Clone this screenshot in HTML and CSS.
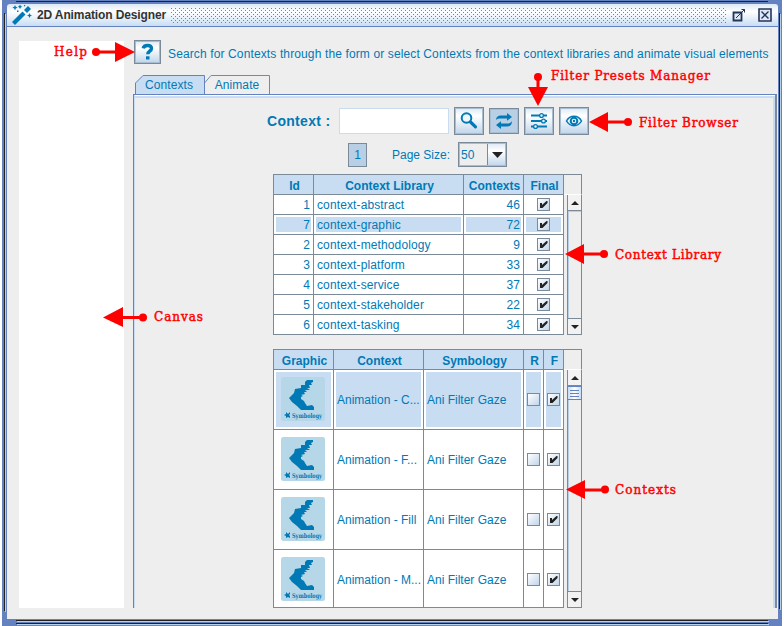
FILE: index.html
```html
<!DOCTYPE html>
<html lang="en">
<head>
<meta charset="utf-8">
<title>2D Animation Designer</title>
<link rel="stylesheet" href="styles.css">
</head>
<body>
<svg class="defs" aria-hidden="true">
  <symbol id="emblem" viewBox="0 0 44 44">
    <rect width="44" height="44" rx="2.5" fill="#b6d7e8"/>
    <path fill="#0079b5" d="M32 3L26 3L24 5L24 8L20 8L20 11L14 12L13 16L8 21L11 25L16 29L20 33L33 33L33 30L31 28L26 29L24 26L23 24L20 22L20 20L22 19L20 18L24 17L23 15L26 15L24 13L29 13L26 11L29 11L28 8L31 8L30 6L32 5z"/>
    <path fill="#0079b5" d="M3 38l2-1V35l2 2 2-2v2l-1 1 1 1v2l-2-1-2 1v-2z"/>
    <text x="11" y="40.600" textLength="30" lengthAdjust="spacingAndGlyphs" class="emblem-text">Symbology</text>
  </symbol>
  <symbol id="tick" viewBox="0 0 11 11"><path fill="#222" d="M2 4h2v2L8.500 2H9.500v2L4.500 9H2z"/></symbol>
</svg>
<div class="window">
  <header class="titlebar">
    <svg class="wand" width="22" height="22" viewBox="0 0 22 22"><path d="M2.500 19.500L13 9" stroke="#0079b5" stroke-width="4.200"/><path d="M14.500 7.500L18.500 3.500" stroke="#0079b5" stroke-width="4.200"/><path fill="#0079b5" d="M4 1l.8 1.800 1.800.8-1.800.8L4 6.200l-.8-1.800-1.800-.8 1.800-.8zM9 .5l.8 1.400 1.400.8-1.400.8L9 4.900l-.8-1.400-1.400-.8 1.400-.8zM18.500 9l.8 1.700 1.700.8-1.700.8-.8 1.700-.8-1.700-1.700-.8 1.700-.8zM6 6.500h1.500V8H6zM13 1h1.200v1.200H13z"/></svg>
    <h1>2D Animation Designer</h1>
    <div class="grip"></div>
    <svg class="win-icon" width="14" height="14" viewBox="0 0 14 14"><path d="M1.500 4.500h8v8h-8z" fill="#dfe9f4" stroke="#24355c" stroke-width="1.800"/><path d="M4 10L12.500 1.500M9.500 1.500h3v3" fill="none" stroke="#24355c"/></svg>
    <svg class="win-icon close" width="14" height="14" viewBox="0 0 14 14"><path d="M1 1h12v12H1z" fill="#dfe9f4" stroke="#24355c" stroke-width="1.600"/><path d="M3.500 3.500l7 7m0-7l-7 7" stroke="#24355c" stroke-width="1.400"/></svg>
  </header>
  <main class="body">
    <div class="canvas"></div>
    <section class="work">
      <div class="help-row">
        <button class="btn help"><svg width="14" height="18" viewBox="0 0 14 18"><path d="M2.200 5.400Q2.800 2.500 6.500 2.500q4 0 4 3c0 2.700-3.700 2.700-3.700 5.700" fill="none" stroke="#0079b5" stroke-width="3.400"/><path d="M5 13.300h3.500v3.200H5z" fill="#0079b5"/></svg></button>
        <span class="hint">Search for Contexts through the form or select Contexts from the context libraries and animate visual elements</span>
      </div>
      <div class="tabs">
        <svg class="tab-shapes" width="136" height="21" viewBox="0 0 136 21"><path d="M69.500 20V8l6.500-7.500h58.500V20" fill="#eee" stroke="#7a8a99"/><path d="M.5 21V8L8 .5h61.500V21z" fill="#c8ddf2"/><path d="M.5 21V8L8 .5h61.500V21" fill="none" stroke="#6382bf"/></svg>
        <span class="tab t1">Contexts</span><span class="tab t2">Animate</span>
      </div>
      <div class="panel">
        <div class="search">
          <label>Context :</label>
          <input type="text" aria-label="Context">
          <button class="btn"><svg width="20" height="20" viewBox="0 0 20 20"><circle cx="7.500" cy="7" r="4.800" fill="#eef6fc" stroke="#0079b5" stroke-width="2"/><path d="M11.500 11l5 4.800" stroke="#0079b5" stroke-width="3.200" stroke-linecap="round"/></svg></button>
          <button class="btn on"><svg width="18" height="18" viewBox="0 0 18 18"><path fill="#0079b5" d="M1 8c0-3 2-4.500 5-4.500h6V1l5 4-5 3.800V6.500H6C3.500 6.500 2 6.700 1 8zM17 9c0 4-2 5.500-5 5.500H6V17l-5-4 5-3.800v2.300h6c2.500 0 4-.8 5-2.500z"/></svg></button>
          <button class="btn"><svg width="18" height="18" viewBox="0 0 18 18"><path d="M1 3.500h16M1 9h16M1 14.500h16" stroke="#0079b5" stroke-width="2"/><g fill="#e8f2fa" stroke="#0079b5" stroke-width="1.300"><circle cx="11.500" cy="3.500" r="1.900"/><circle cx="13.500" cy="9" r="1.900"/><circle cx="5.500" cy="14.500" r="1.900"/></g></svg></button>
          <button class="btn"><svg width="18" height="14" viewBox="0 0 18 14"><path d="M1.500 7C5 .8 13 .8 16.500 7 13 13.200 5 13.200 1.500 7z" fill="#eef6fc" stroke="#0079b5" stroke-width="1.500"/><circle cx="9" cy="7" r="3.300" fill="none" stroke="#0079b5" stroke-width="2"/><circle cx="9" cy="7" r="1.200" fill="#0079b5"/></svg></button>
        </div>
        <div class="paging">
          <span class="page">1</span>
          <span class="page-label">Page Size:</span>
          <div class="combo"><span>50</span><i><svg width="11" height="6" viewBox="0 0 11 6"><path d="M0 0h11L5.500 6z" fill="#222"/></svg></i></div>
        </div>
        <div class="grid-wrap library">
          <div class="table">
            <div class="row head"><b>Id</b><b>Context Library</b><b>Contexts</b><b>Final</b></div>
            <div class="row"><span>1</span><span>context-abstract</span><span>46</span><span><svg class="check"><use href="#tick"/></svg></span></div>
            <div class="row sel"><span>7</span><span>context-graphic</span><span>72</span><span><svg class="check"><use href="#tick"/></svg></span></div>
            <div class="row"><span>2</span><span>context-methodology</span><span>9</span><span><svg class="check"><use href="#tick"/></svg></span></div>
            <div class="row"><span>3</span><span>context-platform</span><span>33</span><span><svg class="check"><use href="#tick"/></svg></span></div>
            <div class="row"><span>4</span><span>context-service</span><span>37</span><span><svg class="check"><use href="#tick"/></svg></span></div>
            <div class="row"><span>5</span><span>context-stakeholder</span><span>22</span><span><svg class="check"><use href="#tick"/></svg></span></div>
            <div class="row"><span>6</span><span>context-tasking</span><span>34</span><span><svg class="check"><use href="#tick"/></svg></span></div>
          </div>
          <div class="side"><div class="corner"></div><div class="scroll"><i class="arrow up"></i><div class="track"></div><i class="arrow down"></i></div></div>
        </div>
        <div class="grid-wrap contexts">
          <div class="table">
            <div class="row head"><b>Graphic</b><b>Context</b><b>Symbology</b><b>R</b><b>F</b></div>
            <div class="row sel"><span><svg width="44" height="44"><use href="#emblem"/></svg></span><span>Animation - C...</span><span>Ani Filter Gaze</span><span><svg class="check"></svg></span><span><svg class="check"><use href="#tick"/></svg></span></div>
            <div class="row"><span><svg width="44" height="44"><use href="#emblem"/></svg></span><span>Animation - F...</span><span>Ani Filter Gaze</span><span><svg class="check"></svg></span><span><svg class="check"><use href="#tick"/></svg></span></div>
            <div class="row"><span><svg width="44" height="44"><use href="#emblem"/></svg></span><span>Animation - Fill</span><span>Ani Filter Gaze</span><span><svg class="check"></svg></span><span><svg class="check"><use href="#tick"/></svg></span></div>
            <div class="row"><span><svg width="44" height="44"><use href="#emblem"/></svg></span><span>Animation - M...</span><span>Ani Filter Gaze</span><span><svg class="check"></svg></span><span><svg class="check"><use href="#tick"/></svg></span></div>
          </div>
          <div class="side"><div class="corner"></div><div class="scroll"><i class="arrow up"></i><div class="track"><div class="thumb"></div></div><i class="arrow down"></i></div></div>
        </div>
      </div>
    </section>
  </main>
</div>
<svg class="callouts" width="784" height="626" viewBox="0 0 784 626">
  <g fill="red" stroke="none">
    <path d="M96 50.500h22v3H96zM115 42l20 10-20 10z"/><circle cx="96" cy="52" r="4"/>
    <path d="M120 316h24v3h-24zM123 307v20l-20-9.500z"/><circle cx="143" cy="317.500" r="4"/>
    <path d="M536.500 77h3v14h-3zM528 87h20l-10 19z"/><circle cx="538" cy="77" r="4"/>
    <path d="M605 120.500h23v3h-23zM608 112v20l-19-10z"/><circle cx="628" cy="122" r="4"/>
    <path d="M582 252.500h22v3h-22zM584 244v20l-19-10z"/><circle cx="604" cy="254" r="4"/>
    <path d="M582 488.500h22v3h-22zM585 480v19l-19-9.500z"/><circle cx="605" cy="489.500" r="4"/>
  </g>
  <g class="callout-text">
    <text x="54" y="56" textLength="33">Help</text>
    <text x="154" y="321" textLength="49">Canvas</text>
    <text x="551" y="80" textLength="159">Filter Presets Manager</text>
    <text x="639" y="127" textLength="99">Filter Browser</text>
    <text x="615" y="259" textLength="106">Context Library</text>
    <text x="615" y="494" textLength="61">Contexts</text>
  </g>
</svg>
</body>
</html>
```
FILE: styles.css
```css
* { box-sizing: border-box; }
body { margin: 0; width: 784px; height: 626px; overflow: hidden; background: #fff; font: 12px/14px "Liberation Sans", sans-serif; color: #0079b5; position: relative; }
.defs { position: absolute; width: 0; height: 0; }
svg { display: block; flex: none; }
.window {
  width: 780px; height: 626px; margin-left: 2px; padding: 4px 4px 8px 5px; display: flex; flex-direction: column;
  background:
    linear-gradient(#222 0 0) 14px 1px / 752px 1px no-repeat,
    linear-gradient(#222 0 0) 14px 620px / 752px 1px no-repeat,
    linear-gradient(#b8cfe5 0 0) 15px 621px / 752px 1px no-repeat,
    linear-gradient(#222 0 0) 14px 623px / 752px 1px no-repeat,
    linear-gradient(#b8cfe5 0 0) 15px 624px / 752px 1px no-repeat,
    linear-gradient(#222 0 0) 2px 13px / 1px 598px no-repeat,
    linear-gradient(#b8cfe5 0 0) 3px 14px / 1px 598px no-repeat,
    linear-gradient(#222 0 0) 777px 13px / 1px 596px no-repeat,
    linear-gradient(#b8cfe5 0 0) 778px 14px / 1px 596px no-repeat,
    #6382bf;
}
.titlebar { height: 23px; flex: none; display: flex; align-items: center; padding: 0 5px 0 4px; border-bottom: 1px solid #6382bf; background: linear-gradient(#dce9f5, #fff 35%, #c8ddf2); border-radius: 3px 3px 0 0; }
.titlebar h1 { margin: 0 4px 0 4px; width: 130px; font-size: 12px; line-height: 22px; color: #333; white-space: nowrap; letter-spacing: -.12px; }
.grip { width: 555px; height: 15px; background: conic-gradient(from 0deg at 1px 1px, transparent 270deg, #6382bf 0) 0 0 / 4px 4px, conic-gradient(from 0deg at 1px 1px, transparent 270deg, #6382bf 0) 2px 2px / 4px 4px; }
.win-icon { margin-left: 6px; }
.win-icon.close { margin-left: 12px; }
.body { flex: 1; display: flex; background: #eee; padding: 13px 0 11px 12px; }
.canvas { width: 105px; height: 567px; margin-top: 1px; background: #fff; flex: none; }
.work { margin-left: 9px; width: 644px; display: flex; flex-direction: column; }
.help-row { display: flex; height: 24px; padding-left: 1px; align-items: center; flex: none; }
.hint { margin-left: 7px; font-size: 12px; white-space: nowrap; letter-spacing: .125px; line-height: 24px; padding-top: 3px; }
.btn { width: 30px; height: 28px; padding: 0; border: 1px solid #7a8a99; background: linear-gradient(#dce8f4, #fff 30%, #c0d5ea); display: flex; align-items: center; justify-content: center; flex: none; outline: 1px solid #a9bdd0; outline-offset: -2px; }
.btn.on { background: #b8cfe5; height: 26px; }
.btn.help { width: 27px; height: 24px; }
.tabs { height: 21px; margin-top: 11px; display: grid; flex: none; grid-template-columns: 68px 68px; align-items: center; margin-left: 2px; }
.tab-shapes { grid-area: 1 / 1 / 2 / 3; }
.tab { text-align: center; line-height: 14px; padding-bottom: 2px; letter-spacing: .1px; }
.t1 { grid-area: 1 / 1; }
.t2 { grid-area: 1 / 2; }
.panel { flex: 1; border-left: 1px solid #6382bf; border-right: 2px solid #7a8a99; border-top: 1px solid #6382bf; box-shadow: inset 1px 0 #c8ddf2, inset 0 1px #fff, inset 0 3px #c8ddf2, inset -2px 0 #c8ddf2; padding: 11px 0 0 133px; margin-top: -2px; min-height: 0; }
.search { display: flex; align-items: center; height: 30px; gap: 5px; }
.search label { width: 67px; font-size: 14px; font-weight: bold; line-height: 16px; letter-spacing: .3px; }
.search input { width: 110px; height: 26px; border: 1px solid #c8ddf2; background: #fff; padding: 0; }
.paging { display: flex; height: 25px; margin: 6px 0 7px 81px; align-items: center; }
.page { width: 19px; height: 24px; border: 1px solid #7a8a99; background: #b8cfe5; line-height: 23px; text-align: center; }
.page-label { margin-left: 25px; width: 66px; white-space: nowrap; }
.combo { display: flex; width: 49px; height: 25px; border: 1px solid #7a8a99; outline: 1px solid #a9bdd0; outline-offset: -2px; }
.combo span { width: 28px; padding-left: 2px; line-height: 24px; letter-spacing: .2px; }
.combo i { flex: 1; display: flex; align-items: center; justify-content: center; border-left: 1px solid #7a8a99; background: linear-gradient(#dce8f4, #fff 35%, #c0d5ea); }
.grid-wrap { display: flex; margin-left: 6px; width: 309px; }
.table { width: 291px; border: solid #7a8a99; border-width: 1px 0 0 1px; }
.row { display: grid; height: 20px; background: #fff; }
.library .row { grid-template-columns: 40px 150px 60px 40px; }
.contexts .row { grid-template-columns: 60px 90px 100px 20px 20px; height: 60px; }
.contexts .row:last-child { height: 58px; }
.row > * { border: solid #7a8a99; border-width: 0 1px 1px 0; white-space: nowrap; overflow: hidden; display: flex; align-items: center; min-width: 0; }
.library .row span { letter-spacing: .12px; }
.contexts .row.head, .row.head { height: 20px; background: #c8ddf2; }
.head b { justify-content: center; padding: 2px 0 0 2px; }
.library span:nth-child(1), .library .row span:nth-child(3) { justify-content: flex-end; padding-right: 3px; }
.library span:nth-child(2) { padding-left: 3px; }
.library span:nth-child(4), .contexts span:nth-child(n+4) { justify-content: center; }
.contexts span:nth-child(1) { padding-left: 7px; align-items: flex-start; padding-top: 7px; }
.contexts .row:last-child span { padding-top: 2px; }
.contexts .row:last-child span:first-child { padding-top: 7px; }
.contexts span:nth-child(2), .contexts span:nth-child(3) { padding-left: 3px; }
.sel > span { background: #c8ddf2; box-shadow: inset 0 0 0 2px #fff; }
.check { width: 13px; height: 13px; border: 1px solid #7a8a99; background: linear-gradient(135deg, #fff, #c0d5ea); }
.side { width: 18px; display: flex; flex-direction: column; }
.corner { height: 21px; border: solid #7a8a99; border-width: 1px 1px 0 0; border-bottom: 1px solid #fff; flex: none; }
.scroll { width: 15px; margin-left: 3px; flex: 1; display: flex; flex-direction: column; border: 1px solid #7a8a99; border-top: 0; background: #eee; }
.arrow { height: 16px; flex: none; display: flex; align-items: center; justify-content: center; background: #f2f2f2; border-bottom: 1px solid #7a8a99; }
.arrow::before { content: ""; border: 4px solid transparent; border-top-width: 0; border-bottom-color: #222; }
.arrow.down { border-bottom: 0; border-top: 1px solid #7a8a99; }
.arrow.down::before { border-width: 4px 4px 0; border-color: #222 transparent transparent; }
.track { flex: 1; box-shadow: inset 1px 1px #b8cfe5; }
.thumb { height: 14px; margin: 0 -1px; border: 1px solid #6382bf; background: linear-gradient(#6382bf 0 0) 2px 3px / 9px 1px no-repeat, linear-gradient(#6382bf 0 0) 2px 6px / 9px 1px no-repeat, linear-gradient(#6382bf 0 0) 2px 9px / 9px 1px no-repeat, linear-gradient(90deg, #c8ddf2, #fff, #c8ddf2); }
.contexts { margin-top: 14px; }
.emblem-text { font: bold 6.500px "DejaVu Serif", serif; fill: #0079b5; }
.callouts { position: absolute; left: 0; top: 0; }
.callout-text { font: 12px "DejaVu Serif", serif; fill: red; stroke: red; stroke-width: .45px; }
```
